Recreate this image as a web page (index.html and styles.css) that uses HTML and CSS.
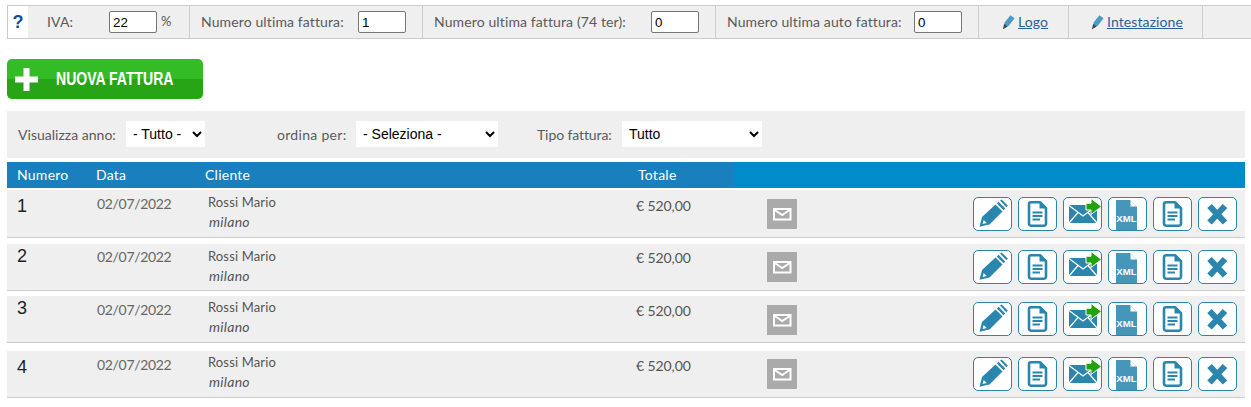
FILE: index.html
```html
<!DOCTYPE html>
<html lang="it">
<head>
<meta charset="utf-8">
<title>Fatture</title>
<link rel="stylesheet" href="styles.css">
</head>
<body>
<svg class="defs" width="0" height="0" aria-hidden="true">
  <symbol id="i-pencil" viewBox="0 0 39 34">
    <path d="M6.5 29.8 9 20 22.5 7.5 29.5 14.5 16.5 27.4Z" fill="#2b86ae"/>
    <path d="M9.6 27 10.6 23 13.8 26Z" fill="#fff"/>
    <path d="M23.8 6.4 25.6 4.8 32.2 11.4 30.6 13.2Z" fill="#2b86ae"/>
    <path d="M27 3.6 28.6 2.4 34.8 8.6 33.4 10.2Z" fill="#2b86ae"/>
  </symbol>
  <symbol id="i-doc" viewBox="0 0 39 34">
    <path d="M13 5.2H22L28 11.2V26.5A2.3 2.3 0 0 1 25.7 28.8H13.3A2.3 2.3 0 0 1 11 26.5V7.2A2 2 0 0 1 13 5.2Z" fill="none" stroke="#2b86ae" stroke-width="2.6" stroke-linejoin="round"/>
    <path d="M21.5 4.5V11.5H28.5Z" fill="#2b86ae"/>
    <path d="M14.5 15.5H24.5M14.5 19H24.5M14.5 22.5H22" stroke="#2b86ae" stroke-width="1.8"/>
  </symbol>
  <symbol id="i-send" viewBox="0 0 39 34">
    <rect x="6" y="8" width="28" height="18" fill="#2b86ae"/>
    <path d="M6 8.5 20 19 34 8.5M6 26 15 15.5M34 26 25 15.5" fill="none" stroke="#fff" stroke-width="1.2"/>
    <path d="M23 6.2H28V1.5L38.5 9.5 28 17.5V13H23Z" fill="#22a30e" stroke="#fff" stroke-width="1"/>
  </symbol>
  <symbol id="i-x" viewBox="0 0 39 34">
    <path d="M11.5 9 27 25.5M27 9 11.5 25.5" fill="none" stroke="#2b86ae" stroke-width="6.2"/>
  </symbol>
  <symbol id="i-mail" viewBox="0 0 30 30">
    <rect x="7" y="10" width="16.5" height="10.5" fill="none" stroke="#fff" stroke-width="2"/>
    <path d="M7 10.5 15.2 16 23.5 10.5" fill="none" stroke="#fff" stroke-width="2"/>
  </symbol>
  <symbol id="i-small" viewBox="0 0 14 16">
    <path d="M3.6 8.6 9.4 1.2 13.6 4.2 7.8 11.8 3.2 14Z" fill="#4a9cc0"/>
    <path d="M3.2 9.8 6.6 12.4 1.8 15.6Z" fill="#3c4a55"/>
  </symbol>
</svg>

<div class="topbar">
  <div class="cell cell-help"><span class="help">?</span></div>
  <div class="cell cell-iva"><span class="lbl lbl-iva">IVA:</span><input class="num-input" type="text" value="22"><span class="pct">%</span></div>
  <div class="cell cell-a"><span class="lbl">Numero ultima fattura:</span><input class="num-input" type="text" value="1"></div>
  <div class="cell cell-b"><span class="lbl">Numero ultima fattura (74 ter):</span><input class="num-input" type="text" value="0"></div>
  <div class="cell cell-c"><span class="lbl">Numero ultima auto fattura:</span><input class="num-input" type="text" value="0"></div>
  <div class="cell cell-d"><svg class="pen"><use href="#i-small"/></svg><a href="#">Logo</a></div>
  <div class="cell cell-e"><svg class="pen"><use href="#i-small"/></svg><a href="#">Intestazione</a></div>
  <div class="cell cell-f"></div>
</div>

<a class="new-btn" href="#">
  <svg class="plus" width="23" height="23" viewBox="0 0 23 23"><path d="M8.5 0H14.5V8.5H23V14.5H14.5V23H8.5V14.5H0V8.5H8.5Z" fill="#fff"/></svg>
  <span class="new-txt">NUOVA FATTURA</span>
</a>

<div class="filters">
  <label class="f-lbl f1">Visualizza anno:</label>
  <select class="sel sel-1"><option>- Tutto -</option></select>
  <label class="f-lbl f2">ordina per:</label>
  <select class="sel sel-2"><option>- Seleziona -</option></select>
  <label class="f-lbl f3">Tipo fattura:</label>
  <select class="sel sel-3"><option>Tutto</option></select>
</div>

<div class="thead">
  <div class="th-dark">
    <span class="th t1">Numero</span>
    <span class="th t2">Data</span>
    <span class="th t3">Cliente</span>
    <span class="th t4">Totale</span>
  </div>
</div>

<div class="row r1">
  <div class="c-num">1</div>
  <div class="c-date">02/07/2022</div>
  <div class="c-name">Rossi Mario<br><em>milano</em></div>
  <div class="c-tot">€ 520,00</div>
  <div class="c-mail"><svg width="30" height="30"><use href="#i-mail"/></svg></div>
  <div class="acts">
    <a class="act" href="#"><svg><use href="#i-pencil"/></svg></a>
    <a class="act" href="#"><svg><use href="#i-doc"/></svg></a>
    <a class="act" href="#"><svg><use href="#i-send"/></svg></a>
    <a class="act" href="#"><svg viewBox="0 0 39 34"><path d="M8 3H22L29 10V33H8Z" fill="#4596b8"/><path d="M22.5 3.5V9.5H28.5Z" fill="#fff"/><text class="xml" x="18.5" y="25">XML</text></svg></a>
    <a class="act" href="#"><svg><use href="#i-doc"/></svg></a>
    <a class="act" href="#"><svg><use href="#i-x"/></svg></a>
  </div>
</div>
<div class="row r2">
  <div class="c-num">2</div>
  <div class="c-date">02/07/2022</div>
  <div class="c-name">Rossi Mario<br><em>milano</em></div>
  <div class="c-tot">€ 520,00</div>
  <div class="c-mail"><svg width="30" height="30"><use href="#i-mail"/></svg></div>
  <div class="acts">
    <a class="act" href="#"><svg><use href="#i-pencil"/></svg></a>
    <a class="act" href="#"><svg><use href="#i-doc"/></svg></a>
    <a class="act" href="#"><svg><use href="#i-send"/></svg></a>
    <a class="act" href="#"><svg viewBox="0 0 39 34"><path d="M8 3H22L29 10V33H8Z" fill="#4596b8"/><path d="M22.5 3.5V9.5H28.5Z" fill="#fff"/><text class="xml" x="18.5" y="25">XML</text></svg></a>
    <a class="act" href="#"><svg><use href="#i-doc"/></svg></a>
    <a class="act" href="#"><svg><use href="#i-x"/></svg></a>
  </div>
</div>
<div class="row r3">
  <div class="c-num">3</div>
  <div class="c-date">02/07/2022</div>
  <div class="c-name">Rossi Mario<br><em>milano</em></div>
  <div class="c-tot">€ 520,00</div>
  <div class="c-mail"><svg width="30" height="30"><use href="#i-mail"/></svg></div>
  <div class="acts">
    <a class="act" href="#"><svg><use href="#i-pencil"/></svg></a>
    <a class="act" href="#"><svg><use href="#i-doc"/></svg></a>
    <a class="act" href="#"><svg><use href="#i-send"/></svg></a>
    <a class="act" href="#"><svg viewBox="0 0 39 34"><path d="M8 3H22L29 10V33H8Z" fill="#4596b8"/><path d="M22.5 3.5V9.5H28.5Z" fill="#fff"/><text class="xml" x="18.5" y="25">XML</text></svg></a>
    <a class="act" href="#"><svg><use href="#i-doc"/></svg></a>
    <a class="act" href="#"><svg><use href="#i-x"/></svg></a>
  </div>
</div>
<div class="row r4">
  <div class="c-num">4</div>
  <div class="c-date">02/07/2022</div>
  <div class="c-name">Rossi Mario<br><em>milano</em></div>
  <div class="c-tot">€ 520,00</div>
  <div class="c-mail"><svg width="30" height="30"><use href="#i-mail"/></svg></div>
  <div class="acts">
    <a class="act" href="#"><svg><use href="#i-pencil"/></svg></a>
    <a class="act" href="#"><svg><use href="#i-doc"/></svg></a>
    <a class="act" href="#"><svg><use href="#i-send"/></svg></a>
    <a class="act" href="#"><svg viewBox="0 0 39 34"><path d="M8 3H22L29 10V33H8Z" fill="#4596b8"/><path d="M22.5 3.5V9.5H28.5Z" fill="#fff"/><text class="xml" x="18.5" y="25">XML</text></svg></a>
    <a class="act" href="#"><svg><use href="#i-doc"/></svg></a>
    <a class="act" href="#"><svg><use href="#i-x"/></svg></a>
  </div>
</div>
</body>
</html>
```
FILE: styles.css
```css
* { box-sizing: border-box; }
html, body { margin: 0; padding: 0; background: #fff; overflow: hidden; }
body {
  padding: 5px 0 0 7px;
  font-family: "Lato", "Open Sans", sans-serif;
  color: #555;
  width: 1251px;
  height: 407px;
}
.defs { position: absolute; }

/* top bar */
.topbar {
  display: flex;
  height: 34px;
  width: 1244px;
  border: 1px solid #ccc;
  border-width: 1px 0 1px 1px;
  background: #efefef;
  font-size: 14px;
}
.cell { display: flex; align-items: center; border-right: 1px solid #ccc; height: 100%; }
.cell-help { width: 20px; background: #fff; border-right: 0; justify-content: center; }
.help { color: #0d4f9e; font: bold 18px "Liberation Sans", sans-serif; }
.cell-iva { width: 162px; padding-left: 19px; }
.lbl { margin-bottom: 2px; letter-spacing: .12px; white-space: nowrap; color: #5a5a5a; }
.lbl-iva { width: 62px; }
.pct { margin: 0 0 2px 4px; font-size: 13px; }
.cell-a { width: 233px; padding: 0 16px 0 11px; justify-content: space-between; }
.cell-b { width: 293px; padding: 0 16px 0 11px; justify-content: space-between; }
.cell-c { width: 263px; padding: 0 16px 0 11px; justify-content: space-between; }
.cell-d { width: 90px; padding-left: 22px; }
.cell-e { width: 134px; padding-left: 21px; }
.cell-f { flex: 1; border-right: 0; }
.num-input {
  width: 48px;
  height: 22px;
  padding: 1px 3px;
  border: 1px solid #767676;
  border-radius: 2px;
  background: #fff;
  color: #000;
  font: 13.33px "Liberation Sans", sans-serif;
}
.pen { width: 14px; height: 16px; margin-right: 3px; }
.cell a { margin-bottom: 2px; color: #2a5f9e; text-decoration: underline; font-size: 14px; letter-spacing: .1px; }

/* new invoice */
.new-btn {
  display: flex;
  align-items: center;
  width: 196px;
  height: 40px;
  margin-top: 20px;
  padding-left: 8px;
  border-radius: 5px;
  background: linear-gradient(#34bc27 0, #34bc27 50%, #28a517 50%, #28a517 100%);
  text-decoration: none;
}
.plus { flex: none; }
.new-txt {
  margin-left: 18px;
  color: #fff;
  font: bold 18px "Liberation Sans", sans-serif;
  white-space: nowrap;
  display: inline-block;
  transform: scaleX(.78);
  transform-origin: left center;
}

/* filters */
.filters {
  display: flex;
  align-items: center;
  width: 1238px;
  height: 47px;
  margin-top: 12px;
  padding: 0 0 1px 11px;
  background: #efefef;
  font-size: 14px;
}
.f-lbl { color: #5a5a5a; white-space: nowrap; }
.f1 { width: 108px; letter-spacing: .02px; }
.f2 { width: 79px; margin-left: 72px; letter-spacing: .3px; }
.f3 { width: 85px; margin-left: 39px; letter-spacing: -.1px; }
.sel {
  height: 26px;
  padding-left: 3px;
  border: 0;
  border-radius: 0;
  background: #fff;
  color: #000;
  font: 14px "Liberation Sans", sans-serif;
}
.sel-1 { width: 79px; }
.sel-2 { width: 142px; }
.sel-3 { width: 140px; }

/* table head */
.thead {
  width: 1238px;
  height: 26px;
  margin-top: 4px;
  background: #008cc9;
}
.th-dark {
  display: flex;
  align-items: center;
  width: 727px;
  height: 100%;
  padding-bottom: 2px;
  background: #1a80bd;
  color: #fff;
  font-size: 14px;
  letter-spacing: .25px;
}
.th { display: block; }
.t1 { width: 89px; padding-left: 10px; }
.t2 { width: 109px; }
.t3 { width: 433px; }
.t4 { width: 90px; }

/* rows */
.row {
  display: grid;
  grid-template-columns: 90px 111px 428px 131px 30px 1fr;
  align-items: start;
  width: 1238px;
  background: #efefef;
  border-bottom: 1px solid #ccc;
  height: var(--h);
  margin-top: var(--mt);
}
.r1 { --h: 48px; --mt: 2px; --num: 6px; --date: 5px; --name: 2px; --tot: 7px; --mail: 9px; --btn: 7px; }
.r2 { --h: 47px; --mt: 6px; --num: 2px; --date: 4px; --name: 2px; --tot: 5px; --mail: 8px; --btn: 6px; }
.r3 { --h: 47px; --mt: 5px; --num: 2px; --date: 5px; --name: 1px; --tot: 6px; --mail: 9px; --btn: 6px; }
.r4 { --h: 47px; --mt: 8px; --num: 6px; --date: 5px; --name: 1px; --tot: 6px; --mail: 8px; --btn: 6px; }
.c-num {
  padding: var(--num) 0 0 10px;
  color: #222;
  font: 18px/21px "Liberation Sans", sans-serif;
}
.c-date { padding-top: var(--date); font-size: 14px; line-height: 18px; letter-spacing: -.32px; color: #666; }
.c-name { padding-top: var(--name); font-size: 13px; line-height: 20px; letter-spacing: .14px; color: #555; }
.c-name em { padding-left: 1px; color: #555; font-size: 14px; letter-spacing: .28px; }
.c-tot { padding-top: var(--tot); font-size: 14px; line-height: 18px; letter-spacing: -.1px; color: #555; }
.c-mail { padding-top: var(--mail); line-height: 0; }
.c-mail svg { display: block; background: #aaa; }
.acts {
  display: flex;
  justify-content: flex-end;
  gap: 6px;
  padding: var(--btn) 8px 0 0;
}
.act {
  display: block;
  width: 39px;
  height: 34px;
  border: 1px solid #2b86ae;
  border-radius: 5px;
  background: #fff;
  overflow: hidden;
}
.act svg { display: block; width: 39px; height: 34px; margin: -1px; }
.xml { fill: #fff; font: bold 9.6px "Liberation Sans", sans-serif; text-anchor: middle; }
```
